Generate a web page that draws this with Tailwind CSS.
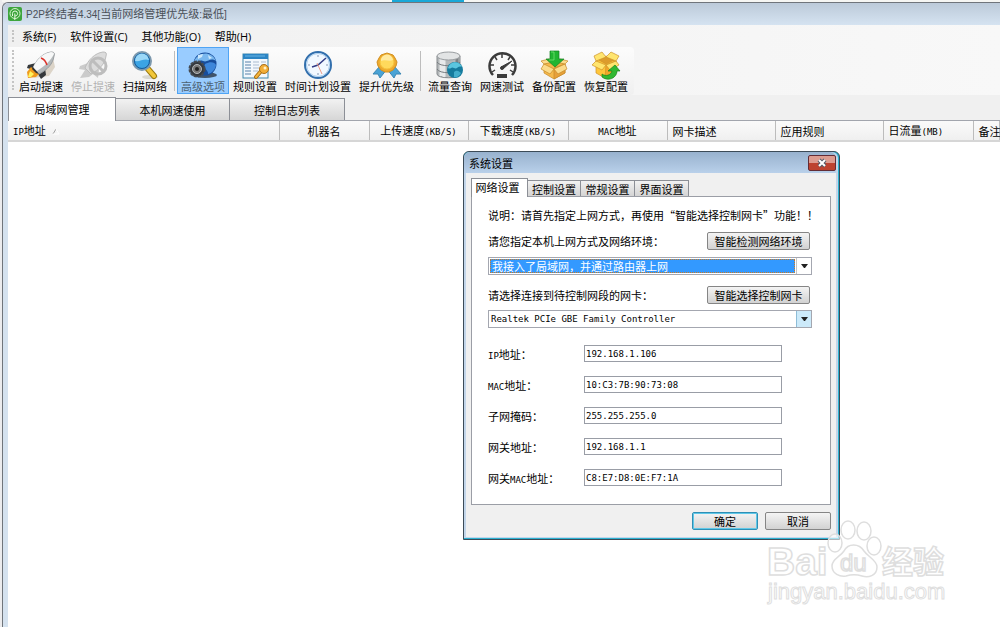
<!DOCTYPE html>
<html lang="zh-CN">
  <head>
    <meta charset="UTF-8" />
    <meta name="viewport" content="width=device-width, initial-scale=1.0" />
    <script src="https://cdn.jsdelivr.net/npm/@tailwindcss/browser@4"></script>
    <title>P2P终结者4.34</title>
  </head>
  <body class="relative flex h-screen flex-col overflow-hidden bg-[#ececee] pl-0.5 font-['Noto_Sans_CJK_SC',sans-serif] text-[11px] leading-4 text-black">
    <div class="flex h-0.5 shrink-0 bg-[#f6f6f3]">
      <div class="ml-[390px] w-[72px] bg-[#18a8d8]"></div>
    </div>

    <!-- main window -->
    <div class="flex grow flex-col rounded-tl-md border-t border-l border-[#70757b] bg-[#d5e2ef]">
      <header class="flex h-[22px] items-center gap-1 rounded-tl-md bg-linear-to-b from-[#bccad9] to-[#d5e3f1] pl-[5px] text-[#4a5058]">
        <svg class="size-[14px]" viewBox="0 0 14 14" fill="none">
          <rect width="14" height="14" rx="2" fill="#3da53c" />
          <circle cx="7" cy="6.5" r="5" stroke="#d5f3cc" />
          <path d="M4.5 9V6.500a2.500 2.500 0 0 1 5 0c0 1.600-1 2.500-2.500 2.500M6.800 6.500V13" stroke="#e4f8de" />
        </svg>
        <h1><span class="font-['Liberation_Sans'] text-[10px]">P2P</span>终结者<span class="font-['Liberation_Sans'] text-[10px]">4.34[</span>当前网络管理优先级<span class="font-['Liberation_Sans'] text-[10px]">:</span>最低<span class="font-['Liberation_Sans'] text-[10px]">]</span></h1>
      </header>

      <div class="ml-[5px] flex grow flex-col bg-white">
        <div class="bg-linear-to-r from-[#f0f0f0] to-[#f8f8f8]">
          <nav class="flex h-[22px] items-center gap-[14px] pl-1">
            <button class="flex items-center gap-2" type="button">
              <span class="h-3 border-l-2 border-dotted border-[#c4c4c4]"></span>
              <span>系统<span class="font-['Open_Sans']">(F)</span></span>
            </button>
            <button type="button">软件设置<span class="font-['Open_Sans']">(C)</span></button>
            <button type="button">其他功能<span class="font-['Open_Sans']">(O)</span></button>
            <button type="button">帮助<span class="font-['Open_Sans']">(H)</span></button>
          </nav>

          <div class="flex h-12 w-fit items-start rounded-r-sm bg-linear-to-b from-[#fcfcfc] to-[#f0f0f0] pr-0.5 pl-1">
            <div class="mt-[3px] mr-px h-10 border-l-2 border-dotted border-[#c4c4c4]"></div>
            <button class="flex h-[47px] flex-col items-center px-1 pt-[3px]" type="button">
              <svg class="size-[30px]" viewBox="0 0 30 30">
                <path d="M7 28l16-2 6-9-2-9-9 14z" fill="#dcd4c8" />
                <path d="M10 13l-8 2-1 3 7 2zM19 18l1 7-5 4-3-5z" fill="#35383b" />
                <path d="M5 17l8 7-3 3-8 1-1-6z" fill="#ef9a1c" />
                <path d="M4 21l4 3-3 3H2z" fill="#fff35e" />
                <path d="M7 18C10 10 17 3 25 2c3 0 4 1 3 4-1 8-7 14-15 18z" fill="#b4b9bb" stroke="#999da0" />
                <path d="M7 18C10 10 17 3 25 2c2 0 3 1 3 2-3 6-9 12-17 17z" fill="#f7f8f8" />
                <path d="M15 8c3 1 5 4 6 7" stroke="#dc342c" stroke-width="1.500" fill="none" />
                <path d="M7 17l6 7-3-1-4-4z" fill="#333" />
              </svg>
              <span class="leading-3">启动提速</span>
            </button>
            <button class="flex h-[47px] flex-col items-center px-1 pt-[3px] text-[#b1b1b1]" type="button" disabled>
              <svg class="size-[30px]" viewBox="0 0 30 30">
                <path d="M10 13l-8 3-1 3 6 1-5 8 9-1 4-3 5 4 1-8z" fill="#cbcbcb" />
                <path d="M7 18C10 10 17 3 25 2c3 0 4 1 3 4-1 8-7 14-15 18z" fill="#dcdcdc" stroke="#bcbcbc" />
                <circle cx="20" cy="16" r="8" fill="none" stroke="#bdbdbd" stroke-width="3" />
                <path d="M14 10l12 12" stroke="#bdbdbd" stroke-width="3" />
              </svg>
              <span class="leading-3">停止提速</span>
            </button>
            <button class="flex h-[47px] flex-col items-center px-1 pt-[3px]" type="button">
              <svg class="size-[30px]" viewBox="0 0 30 30">
                <ellipse cx="20" cy="27" rx="8" ry="2" fill="#d8d8d2" />
                <path d="M18 19l6 7" stroke="#9c7b10" stroke-width="6" stroke-linecap="round" />
                <path d="M18 19l6 7" stroke="#f2c73a" stroke-width="4" stroke-linecap="round" />
                <circle cx="12" cy="11" r="9" fill="#2a8fd2" stroke="#7c98ad" stroke-width="2" />
                <circle cx="12" cy="11" r="7.500" fill="#3ba4e4" stroke="#195b98" />
                <path d="M5 11a7 7 0 0 1 14-1c-5-2-9 2-14 1z" fill="#9bd8f8" />
              </svg>
              <span class="leading-3">扫描网络</span>
            </button>
            <div class="mr-[2px] ml-[3px] mt-1 h-10 border-l border-[#bdbdbd]"></div>
            <button class="flex h-[47px] flex-col items-center border border-[#4fa4f4] bg-[#99ccff] px-[3px] pt-0.5 text-[#4c6172]" type="button">
              <svg class="size-[30px]" viewBox="0 0 30 30">
                <ellipse cx="17" cy="25" rx="12" ry="3" fill="#40546a" />
                <circle cx="17" cy="14" r="11.500" fill="#174d9c" />
                <path d="M6 12C9 2 23 0 28 11c-6-4-8 2-13 0s-5 3-9 1z" fill="#79b7ee" />
                <path d="M17 14c5-3 10-2 11 1-1 5-4 8-8 9 1-3-5-6-3-10z" fill="#3d86da" />
                <path d="M10 5l5-1-1 3-4 2zM20 5l4 3-3 1z" fill="#cce8fc" />
                <circle cx="9" cy="19" r="7.500" fill="#34383d" stroke="#454b52" stroke-width="2" stroke-dasharray="3 1" />
                <circle cx="9" cy="19" r="4.500" fill="#777" stroke="#b5b9bc" />
                <circle cx="9" cy="19" r="2" fill="#222" />
              </svg>
              <span class="leading-3">高级选项</span>
            </button>
            <button class="flex h-[47px] flex-col items-center px-1 pt-[3px]" type="button">
              <svg class="size-[30px]" viewBox="0 0 30 30">
                <rect x="3" y="4" width="25" height="24" fill="#f3f8fc" stroke="#3f87ac" />
                <path d="M3 4h25v5H3z" fill="#2c85c4" />
                <path d="M5 6h20" stroke="#69b6e5" />
                <path d="M5 12h6M5 15h6M5 18h6M5 21h6M5 24h6" stroke="#a5bdd3" stroke-width="2" />
                <path d="M13 12h6M21 12h5M13 15h6M21 15h5M13 18h6M21 18h5M13 21h5" stroke="#cfdae6" stroke-width="2" />
                <path d="M22 20l-6 7" stroke="#a86e18" stroke-width="4" stroke-linecap="round" />
                <path d="M22 20l-6 7" stroke="#f5b63d" stroke-width="2" stroke-linecap="round" />
                <circle cx="24" cy="19" r="4.500" fill="#f2ae38" stroke="#ad7118" />
                <circle cx="25" cy="18" r="1.500" fill="#fff2c8" />
              </svg>
              <span class="leading-3">规则设置</span>
            </button>
            <button class="flex h-[47px] flex-col items-center px-1 pt-[3px]" type="button">
              <svg class="size-[30px]" viewBox="0 0 30 30" fill="none">
                <circle cx="15" cy="15" r="13" fill="#f2f8ff" stroke="#326fad" stroke-width="2" />
                <circle cx="15" cy="15" r="11.500" stroke="#a6cbed" />
                <path d="M15 5v2M15 23v2M5 15h2M23 15h2" stroke="#8296b3" />
                <path d="M9 17l6-2 8-7" stroke="#343c85" stroke-width="1.500" />
                <path d="M14 13l5 11" stroke="#ed9b87" />
              </svg>
              <span class="leading-3">时间计划设置</span>
            </button>
            <button class="flex h-[47px] flex-col items-center px-1 pt-[3px]" type="button">
              <svg class="size-[30px]" viewBox="0 0 30 30">
                <path d="M8 16l-7 8 5 0 2 4 7-9zM22 16l7 8-5 0-2 4-7-9z" fill="#4aa3d5" stroke="#3a86b4" />
                <path d="M15 3l3 1 3 1 2 3 2 4-1 4-3 4-4 2h-4l-4-2-3-4-1-4 2-4 2-3 3-1z" fill="#eeaa2d" stroke="#d28f1e" />
                <circle cx="15" cy="12" r="7" fill="#ffd95c" stroke="#f5c23c" />
                <path d="M9 11a6 6 0 0 1 12-1c-4 2-8-1-12 1z" fill="#ffeaa0" />
              </svg>
              <span class="leading-3">提升优先级</span>
            </button>
            <div class="mr-[3px] ml-[2px] mt-1 h-10 border-l border-[#bdbdbd]"></div>
            <button class="flex h-[47px] flex-col items-center px-1 pt-[3px]" type="button">
              <svg class="size-[30px]" viewBox="0 0 30 30">
                <path d="M2 6v18c0 5 23 5 23 0V6z" fill="#b5b9bb" stroke="#868a8d" />
                <path d="M6 8v18M9 9v18" stroke="#e8eaeb" stroke-width="3" />
                <path d="M22 8v17" stroke="#7d8184" stroke-width="3" />
                <path d="M2 12c2 5 21 5 23 0M2 19c2 5 21 5 23 0" fill="none" stroke="#777c80" />
                <ellipse cx="13.500" cy="6" rx="11.500" ry="4" fill="#e2e4e5" stroke="#999da0" />
                <circle cx="20" cy="20" r="8" fill="#167b9d" />
                <path d="M13 18c2-7 11-8 14-1-4-2-5 3-8 1s-3 2-6 0z" fill="#5bc6df" />
                <path d="M19 22c3-3 6 0 7 1-2 4-5 5-7 4z" fill="#43adcb" />
              </svg>
              <span class="leading-3">流量查询</span>
            </button>
            <button class="flex h-[47px] flex-col items-center px-1 pt-[3px]" type="button">
              <svg class="size-[30px]" viewBox="0 0 30 30" fill="none" stroke="#3b3b3b">
                <path d="M6 25a13 13 0 1 1 19 0" stroke-width="2.500" />
                <path d="M15 4v4M8 7l2 3M23 7l-2 3M3 15h4M24 15h4M5 22l3-2M26 22l-3-2" stroke-width="1.500" />
                <path d="M14 17l11-6-9 8z" fill="#3b3b3b" />
                <circle cx="15" cy="18" r="1.500" fill="#3b3b3b" />
                <path d="M10 26h10" stroke-width="4" />
              </svg>
              <span class="leading-3">网速测试</span>
            </button>
            <button class="flex h-[47px] flex-col items-center px-1 pt-[3px]" type="button">
              <svg class="size-[30px]" viewBox="0 0 30 30" stroke="#c68b2a" stroke-width=".7">
                <path d="M5 14l11-4 10 4v9l-11 6-10-6z" fill="#f5b84b" />
                <path d="M15 18l11-4v9l-11 6z" fill="#e7a03a" />
                <path d="M5 14l10 5-4 5-9-5zM26 14l-11 5 4 5 9-5zM5 14l-3-3 8-2 5 3zM26 14l3-3-8-2-5 3z" fill="#fbdb8b" />
                <path d="M11 1h9v8h5l-9 8-9-8h4z" fill="#21b531" stroke="#168323" />
                <path d="M12 2h3v8h-5" fill="none" stroke="#80e77c" />
              </svg>
              <span class="leading-3">备份配置</span>
            </button>
            <button class="flex h-[47px] flex-col items-center px-1 pt-[3px]" type="button">
              <svg class="size-[30px]" viewBox="0 0 30 30" stroke="#ce922a" stroke-width=".7">
                <path d="M5 11l10-5 10 5v12l-11 5-9-5z" fill="#ffc63a" />
                <path d="M15 15l10-4v12l-11 5z" fill="#f1a72a" />
                <path d="M8 10l7-3 8 3-8 4z" fill="#dc9c2c" />
                <path d="M5 11l10 4-4 5-10-5zM25 11l-10 4 4 5 9-5zM5 11L3 6l8-4 4 5zM25 11l3-5-8-4-5 5z" fill="#ffe56f" />
                <path d="M11 24c4 3 9 1 10-3h-4l7-6 5 6h-3c0 7-9 11-15 6z" fill="#31b831" stroke="#17841c" />
              </svg>
              <span class="leading-3">恢复配置</span>
            </button>
          </div>
        </div>

        <div class="flex h-[26px] items-end border-b border-[#a2a5ad] bg-[#f0f0f0]" role="tablist">
          <button class="-mb-px h-6 w-[108px] border border-b-0 border-[#8c8f96] bg-white pb-0.5" type="button" role="tab" aria-selected="true">局域网管理</button>
          <button class="h-[22px] w-[114px] border border-b-0 border-l-0 border-[#8c8f96] bg-linear-to-b from-[#f2f2f2] to-[#d6d6d6]" type="button" role="tab">本机网速使用</button>
          <button class="h-[22px] w-[115px] border border-b-0 border-l-0 border-[#8c8f96] bg-linear-to-b from-[#f2f2f2] to-[#d6d6d6]" type="button" role="tab">控制日志列表</button>
        </div>

        <table class="w-full table-fixed border-b-2 border-[#d6d6d6] bg-linear-to-b from-[#fafafa] to-[#efefef]">
          <thead>
            <tr class="h-5 whitespace-nowrap *:border-r *:border-[#bcbcbc] *:p-0 *:pt-px *:font-normal">
              <th class="w-[271px] text-left">
                <span class="ml-[5px]"><span class="font-['DejaVu_Sans_Mono'] text-[9px]">IP</span>地址</span>
                <svg class="ml-1 inline size-2" viewBox="0 0 8 8" fill="none">
                  <path d="M1 6l3-5" stroke="#a0a0a0" />
                  <path d="M4 1l3 5H1" stroke="#fff" />
                </svg>
              </th>
              <th class="w-[90px]">机器名</th>
              <th class="w-[99px]">上传速度<span class="font-['DejaVu_Sans_Mono'] text-[9px]">(KB/S)</span></th>
              <th class="w-[100px]">下载速度<span class="font-['DejaVu_Sans_Mono'] text-[9px]">(KB/S)</span></th>
              <th class="w-[99px]"><span class="font-['DejaVu_Sans_Mono'] text-[9px]">MAC</span>地址</th>
              <th class="w-[108px] text-left"><span class="ml-[5px]">网卡描述</span></th>
              <th class="w-[108px] text-left"><span class="ml-[5px]">应用规则</span></th>
              <th class="w-[90px] text-left"><span class="ml-[5px]">日流量<span class="font-['DejaVu_Sans_Mono'] text-[9px]">(MB)</span></span></th>
              <th class="text-left"><span class="ml-[5px]">备注</span></th>
            </tr>
          </thead>
        </table>
      </div>
    </div>

    <!-- settings dialog -->
    <div class="absolute top-[151px] left-[463px] w-[377px] rounded-t-md border border-[#3c4b57] bg-[#2bb1d0] pr-px pb-px" role="dialog" aria-labelledby="dialog-title">
      <div class="rounded-t-md bg-[#c3d6ea] pr-0.5 pb-px">
        <div class="flex h-[21px] items-center justify-between rounded-t-md bg-linear-to-b from-[#98b2ce] to-[#b9d0ea] pl-[5px]">
          <h2 id="dialog-title">系统设置</h2>
          <button class="flex h-4 w-7 items-center justify-center rounded-xs border border-[#632c35] bg-linear-to-b from-[#dd9c90] from-50% to-[#bd4330] to-50%" type="button" aria-label="关闭">
            <svg class="h-2.5 w-3" viewBox="0 0 12 10">
              <path d="M3 2l6 6M9 2L3 8" stroke="#525a68" stroke-width="4" />
              <path d="M3 2l6 6M9 2L3 8" stroke="#fff" stroke-width="2" />
            </svg>
          </button>
        </div>

        <div class="ml-0.5 bg-[#f0f0f0] px-[5px] pt-[5px] pb-[7px]">
          <div class="flex h-[18px] items-end" role="tablist">
            <button class="relative -mb-px h-[19px] w-[57px] border border-b-0 border-[#8c8f96] bg-white pr-1 pb-0.5" type="button" role="tab" aria-selected="true">网络设置</button>
            <button class="h-4 w-[53px] border border-b-0 border-l-0 border-[#8c8f96] bg-linear-to-b from-[#f2f2f2] to-[#d4d4d4]" type="button" role="tab">控制设置</button>
            <button class="h-4 w-[54px] border border-b-0 border-l-0 border-[#8c8f96] bg-linear-to-b from-[#f2f2f2] to-[#d4d4d4]" type="button" role="tab">常规设置</button>
            <button class="h-4 w-[54px] border border-b-0 border-l-0 border-[#8c8f96] bg-linear-to-b from-[#f2f2f2] to-[#d4d4d4]" type="button" role="tab">界面设置</button>
          </div>
          <form class="border border-[#9b9ea6] bg-white pt-[10px] pr-[18px] pb-[18px] pl-4" id="settings" onsubmit="event.preventDefault()">
            <p class="whitespace-nowrap">说明：请首先指定上网方式，再使用“智能选择控制网卡”功能！！</p>

            <div class="mt-[9px] flex h-[18px] items-center justify-between">
              <label for="network">请您指定本机上网方式及网络环境：</label>
              <button class="mr-0.5 h-[18px] w-[103px] rounded-xs border border-[#858585] bg-linear-to-b from-[#f4f4f4] to-[#d2d2d2]" type="button">智能检测网络环境</button>
            </div>
            <div class="mt-[7px] flex h-[18px] border border-[#a4a7b0] bg-white">
              <select class="m-px h-3.5 grow appearance-none border border-dotted border-[#cd7a22] bg-[#3399ff] pl-px text-[11px] leading-3 text-white outline-none" id="network" name="network">
                <option>我接入了局域网，并通过路由器上网</option>
              </select>
              <span class="flex w-[15px] items-center justify-center border-l border-[#c5c5c5]">
                <svg class="h-1 w-[7px]" viewBox="0 0 7 4"><path d="M0 0h7L4 4H3z" fill="#222" /></svg>
              </span>
            </div>

            <div class="mt-[11px] flex h-[18px] items-center justify-between">
              <label for="adapter">请选择连接到待控制网段的网卡：</label>
              <button class="mr-0.5 h-[18px] w-[103px] rounded-xs border border-[#858585] bg-linear-to-b from-[#f4f4f4] to-[#d2d2d2]" type="button">智能选择控制网卡</button>
            </div>
            <div class="mt-[6px] flex h-[18px] border border-[#a4a7b0] bg-white">
              <select class="grow appearance-none pl-[2px] font-['DejaVu_Sans_Mono'] text-[9px] leading-4 outline-none" id="adapter" name="adapter">
                <option>Realtek PCIe GBE Family Controller</option>
              </select>
              <span class="flex w-[15px] items-center justify-center border-l border-[#8ebdd8] bg-[#cceafa]">
                <svg class="h-1 w-[7px]" viewBox="0 0 7 4"><path d="M0 0h7L4 4H3z" fill="#222" /></svg>
              </span>
            </div>

            <div class="mt-[17px] grid grid-cols-[96px_198px] gap-y-[14px]">
              <label class="h-[17px] leading-[18px]" for="ip"><span class="font-['DejaVu_Sans_Mono'] text-[9px]">IP</span>地址：</label>
              <input class="h-[17px] border border-[#999da6] pl-px font-['DejaVu_Sans_Mono'] text-[9px]" id="ip" type="text" value="192.168.1.106" />
              <label class="h-[17px] leading-[18px]" for="mac"><span class="font-['DejaVu_Sans_Mono'] text-[9px]">MAC</span>地址：</label>
              <input class="h-[17px] border border-[#999da6] pl-px font-['DejaVu_Sans_Mono'] text-[9px]" id="mac" type="text" value="10:C3:7B:90:73:08" />
              <label class="h-[17px] leading-[18px]" for="mask">子网掩码：</label>
              <input class="h-[17px] border border-[#999da6] pl-px font-['DejaVu_Sans_Mono'] text-[9px]" id="mask" type="text" value="255.255.255.0" />
              <label class="h-[17px] leading-[18px]" for="gateway">网关地址：</label>
              <input class="h-[17px] border border-[#999da6] pl-px font-['DejaVu_Sans_Mono'] text-[9px]" id="gateway" type="text" value="192.168.1.1" />
              <label class="h-[17px] leading-[18px]" for="gateway-mac">网关<span class="font-['DejaVu_Sans_Mono'] text-[9px]">MAC</span>地址：</label>
              <input class="h-[17px] border border-[#999da6] pl-px font-['DejaVu_Sans_Mono'] text-[9px]" id="gateway-mac" type="text" value="C8:E7:D8:0E:F7:1A" />
            </div>
          </form>
          <div class="mt-[7px] flex justify-end gap-[7px]">
            <button class="h-[18px] w-[66px] rounded-xs border border-[#2f8fb5] bg-linear-to-b from-[#f4f4f4] to-[#d2d2d2] ring-1 ring-[#5fc8e8] ring-inset" type="submit" form="settings">确定</button>
            <button class="h-[18px] w-[66px] rounded-xs border border-[#858585] bg-linear-to-b from-[#f4f4f4] to-[#d2d2d2]" type="button">取消</button>
          </div>
        </div>
      </div>
    </div>

    <svg class="pointer-events-none absolute right-[50px] bottom-[17px] h-[92px] w-[186px]" viewBox="0 0 186 92" fill="#fff" fill-opacity=".6" stroke="#dedede">
      <g font-family="Liberation Sans, sans-serif" font-weight="bold" stroke-width="1.500">
        <text x="3" y="57" font-size="39">Bai</text>
        <path d="M68 48c0-7 8-9 12-15 4-8 15-8 20 0 4 6 13 9 13 16 0 9-9 11-15 9-6-2-10-2-16 0-6 1-14-2-14-10z" />
        <ellipse cx="71" cy="25" rx="7" ry="9" />
        <ellipse cx="84" cy="12" rx="7" ry="9" />
        <ellipse cx="100" cy="13" rx="7" ry="9" />
        <ellipse cx="110" cy="28" rx="7" ry="9" />
        <text x="76" y="53" font-size="24" font-weight="normal">du</text>
        <text x="118" y="55" font-family="Noto Sans CJK SC, sans-serif" font-size="31">经验</text>
      </g>
      <text x="4" y="81" font-family="Liberation Sans, sans-serif" font-size="22">jingyan.baidu.com</text>
    </svg>
  </body>
</html>
